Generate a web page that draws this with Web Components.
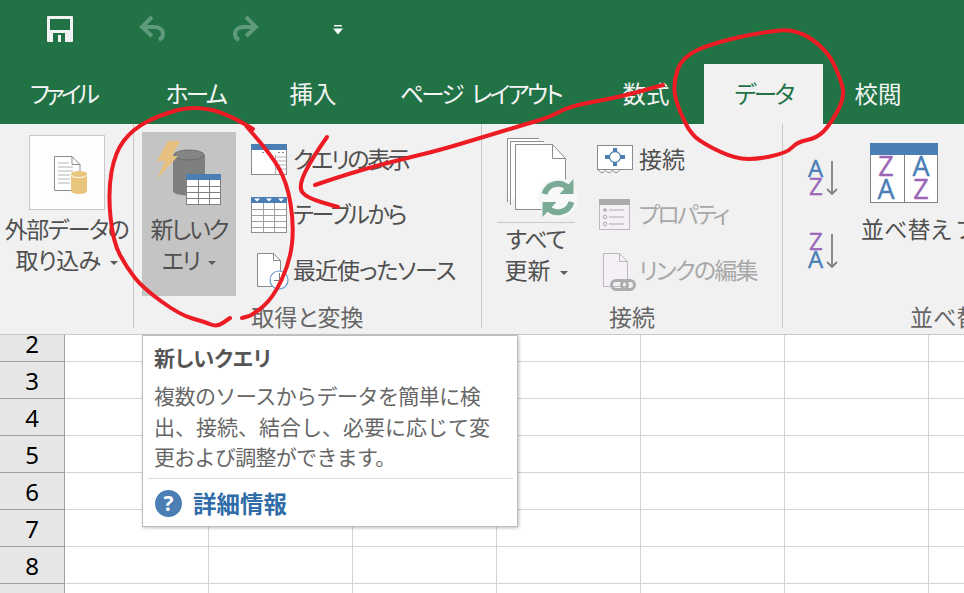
<!DOCTYPE html>
<html lang="ja">
<head>
<meta charset="utf-8">
<title>Excel データ タブ</title>
<style>
    html, body { margin: 0; padding: 0; background: #fff; overflow: hidden; }
</style>
</head>
<body>
<xl-window>
    <xl-titlebar></xl-titlebar>
    <xl-tabs>
        <xl-tab w="126" ls="-3.8">ファイル</xl-tab>
        <xl-tab w="125" gap="7" ls="-2.6">ホーム</xl-tab>
        <xl-tab w="108" gap="1">挿入</xl-tab>
        <xl-tab w="219" gap="4" ls="-2.6" ws="7">ページ レイアウト</xl-tab>
        <xl-tab w="106" gap="3">数式</xl-tab>
        <xl-tab w="119" gap="5" ls="-2.6" active>データ</xl-tab>
        <xl-tab w="106" gap="2">校閲</xl-tab>
    </xl-tabs>
    <xl-ribbon>
        <xl-group label="" w="134">
            <xl-big top="11" box ls="-1.5">
                <xl-icon name="external" slot="icon"></xl-icon>
                外部データの<br><span style="letter-spacing:-.6px">取り込み</span><xl-caret></xl-caret>
            </xl-big>
        </xl-group>
        <xl-group label="取得と変換" w="348">
            <xl-big top="8" left="8" width="94" pressed h="83" ls="-2">
                <xl-icon name="query" slot="icon"></xl-icon>
                新しいク<br>エリ<xl-caret></xl-caret>
            </xl-big>
            <xl-stack left="15">
                <xl-small ls="-2.4"><xl-icon name="view" slot="icon"></xl-icon>クエリの表示</xl-small>
                <xl-small ls="-2.3"><xl-icon name="table" slot="icon"></xl-icon>テーブルから</xl-small>
                <xl-small ls="-1"><xl-icon name="recent" slot="icon"></xl-icon>最近使ったソース</xl-small>
            </xl-stack>
        </xl-group>
        <xl-group label="接続" w="301">
            <xl-big top="12" left="15" width="78" h="89" rule ls="-1">
                <xl-icon name="refresh" slot="icon"></xl-icon>
                すべて<br><span style="letter-spacing:0">更新</span><xl-caret></xl-caret>
            </xl-big>
            <xl-stack left="22">
                <xl-small><xl-icon name="connect" slot="icon"></xl-icon>接続</xl-small>
                <xl-small disabled ls="-2.8"><xl-icon name="props" slot="icon"></xl-icon>プロパティ</xl-small>
                <xl-small disabled ls="-1.7"><xl-icon name="link" slot="icon"></xl-icon>リンクの編集</xl-small>
            </xl-stack>
        </xl-group>
        <xl-group label="並べ替えとフィルター" w="181" open>
            <xl-sort-col>
                <xl-icon name="az"></xl-icon>
                <xl-icon name="za"></xl-icon>
            </xl-sort-col>
            <xl-big top="19" left="21" width="200" h="72" start>
                <xl-icon name="sort" slot="icon"></xl-icon>
                並べ替え フィルター
            </xl-big>
        </xl-group>
    </xl-ribbon>
    <xl-sheet></xl-sheet>
    <xl-tooltip>
        <span slot="title">新しいクエリ</span>
        <span style="letter-spacing:-.55px">複数のソースからデータを簡単に検</span><br>出、接続、結合し、必要に応じて変<br><span style="letter-spacing:-.7px">更および調整ができます。</span>
        <span slot="help">詳細情報</span>
    </xl-tooltip>
    <xl-ink></xl-ink>
</xl-window>

<script>
const ICONS = {
    save: `<svg width="26" height="26" viewBox="0 0 26 26">
        <path d="M0 1a1 1 0 0 1 1-1h24a1 1 0 0 1 1 1v24a1 1 0 0 1-1 1H1a1 1 0 0 1-1-1z" fill="#f2f2f2"/>
        <rect x="3" y="3" width="20" height="11" fill="#217346"/>
        <rect x="6" y="17" width="12" height="9" fill="#217346"/>
        <rect x="11" y="19" width="3" height="7" fill="#f2f2f2"/>
    </svg>`,
    undo: `<svg width="28" height="28" viewBox="0 0 28 28" fill="none" stroke="#5f9a7d" stroke-width="4">
        <path d="M13 2 3 12l10 9"/><path d="M4 12h11c6 0 9 3 9 7 0 3-2 5-4 6"/>
    </svg>`,
    redo: `<svg width="28" height="28" viewBox="0 0 28 28" fill="none" stroke="#5f9a7d" stroke-width="4">
        <path d="m15 2 10 10-10 9"/><path d="M24 12H13c-6 0-9 3-9 7 0 3 2 5 4 6"/>
    </svg>`,
    qat: `<svg width="10" height="10" viewBox="0 0 10 10">
        <rect x="1" y="0" width="8" height="1.4" fill="#fff"/><path d="M0 3.500h10L5 9.500z" fill="#fff"/>
    </svg>`,
    external: `<svg width="75" height="75" viewBox="0 0 75 75" fill="none">
        <path d="M25.500 21.500H43l8 8v26H25.500z" fill="#fff" stroke="#8c8c8c"/>
        <path d="M43 21.500v8h8" stroke="#8c8c8c"/>
        <path d="M29 28h11M29 32h15M29 36h15M29 40h12M29 44h12M29 48h12" stroke="#b4b4b4"/>
        <path d="M42 39c0-4 16-4 16 0v17c0 4-16 4-16 0z" fill="#e9c47d"/>
        <path d="M42.500 40c1 3.500 14 3.500 15 0" stroke="#fff"/>
    </svg>`,
    query: `<svg width="94" height="83" viewBox="0 0 94 83" fill="none">
        <path d="M31 24c0-6 32-6 32 0v35c0 6-32 6-32 0z" fill="#7f7f7f"/>
        <ellipse cx="47" cy="23" rx="15" ry="5" fill="#858585" stroke="#6c6c6c"/>
        <path d="M26 9h12l-8 15h6L15 47l8-18h-8z" fill="#e8c07f"/>
        <rect x="44.500" y="42.500" width="34" height="30" fill="#fff" stroke="#808080"/>
        <rect x="44" y="42" width="35" height="6" fill="#4a7eb5"/>
        <path d="M45 54.500h33M45 60.500h33M45 66.500h33M56.500 48v24M67.500 48v24" stroke="#808080"/>
    </svg>`,
    view: `<svg width="36" height="31" viewBox="0 0 36 31" fill="none">
        <rect x=".5" y=".5" width="35" height="30" fill="#fff" stroke="#8c8c8c"/>
        <rect width="36" height="6" fill="#4a7eb5"/>
        <path d="M11 8.500h2M15 8.500h2M27 8.500h2M31 8.500h2" stroke="#8c8c8c"/>
        <path d="M24.500 11v20M25 13h10M25 17h10M25 21h10M25 25h10" stroke="#b0b0b0"/>
    </svg>`,
    table: `<svg width="36" height="36" viewBox="0 0 36 36" fill="none">
        <rect x=".5" y=".5" width="35" height="35" fill="#fff" stroke="#8c8c8c"/>
        <rect width="36" height="6" fill="#4a7eb5"/>
        <path d="M3 1.500h6l-3 3zM15 1.500h6l-3 3zM27 1.500h6l-3 3z" fill="#fff"/>
        <path d="M1 12.500h34M1 18.500h34M1 24.500h34M1 30.500h34M12.500 6v30M23.500 6v30" stroke="#a0a0a0"/>
    </svg>`,
    recent: `<svg width="42" height="38" viewBox="0 0 42 38" fill="none">
        <path d="M6.500 1.500h16l7 7v26h-23z" fill="#fff" stroke="#8c8c8c"/>
        <path d="M22.500 1.500v7h7" stroke="#8c8c8c"/>
        <circle cx="28" cy="28" r="9" fill="#fff" stroke="#6a9bd0" stroke-width="1.200"/>
        <path d="M28.500 21v7.500H23" stroke="#7a7a7a"/>
    </svg>`,
    refresh: `<svg width="78" height="89" viewBox="0 0 78 89" fill="none">
        <path d="M10.500 66V2.500H42" stroke="#8c8c8c" fill="#fff"/>
        <path d="M13.500 69V5.500H47" stroke="#8c8c8c" fill="#fff"/>
        <path d="M18.500 8.500h37l13 14v51h-50z" fill="#fff" stroke="#8c8c8c"/>
        <path d="M55.500 8.500v14h13" stroke="#8c8c8c"/>
        <circle cx="61" cy="62" r="20" fill="#f8f8f8"/>
        <path d="M47.500 58a14 14 0 0 1 24-5.500" stroke="#7aab97" stroke-width="6"/>
        <path d="M76.500 43v15h-14z" fill="#7aab97"/>
        <path d="M74.500 66a14 14 0 0 1-24 5.500" stroke="#7aab97" stroke-width="6"/>
        <path d="M45.500 81V66h14z" fill="#7aab97"/>
    </svg>`,
    connect: `<svg width="36" height="30" viewBox="0 0 36 30" fill="none">
        <path d="M1.500 24.500c1 4 6 4 7 0 1 4 6 4 7 0 1 4 6 4 7 0" stroke="#8c8c8c" fill="#fff"/>
        <rect x=".5" y=".5" width="35" height="24" fill="#fff" stroke="#8c8c8c"/>
        <path d="M16 3h4v4h-4zM16 17h4v4h-4zM8 10h5v4H8zM23 10h5v4h-5z" fill="#4a7eb5"/>
        <circle cx="18" cy="12" r="5.500" fill="#fff" stroke="#4a7eb5" stroke-width="1.300"/>
    </svg>`,
    props: `<svg width="36" height="32" viewBox="0 0 36 32" fill="none">
        <rect x="2.500" y=".5" width="30" height="30" fill="#f4f0f6" stroke="#bdb6c0"/>
        <rect x="2" width="31" height="6" fill="#acacac"/>
        <circle cx="8" cy="11" r="1.800" fill="#b0a8b4"/>
        <circle cx="8" cy="18" r="1.800" stroke="#b0a8b4"/>
        <circle cx="8" cy="25" r="1.800" stroke="#b0a8b4"/>
        <path d="M12 11h15M12 18h15M12 25h15" stroke="#b0a8b4"/>
    </svg>`,
    link: `<svg width="42" height="38" viewBox="0 0 42 38" fill="none">
        <path d="M6.500 1.500h16l8 8v25h-24z" fill="#f4f0f6" stroke="#bdb6c0"/>
        <path d="M22.500 1.500v8h8" stroke="#bdb6c0"/>
        <rect x="14.500" y="28.500" width="16" height="9" rx="4.500" stroke="#adadad" stroke-width="3"/>
        <rect x="24.500" y="28.500" width="13" height="9" rx="4.500" stroke="#adadad" stroke-width="3"/>
    </svg>`,
    az: `<svg width="32" height="38" viewBox="0 0 32 38" font-family="Open Sans, Liberation Sans, sans-serif" font-size="24">
        <text x="0" y="18" fill="#4a7eb5" stroke="#4a7eb5" stroke-width=".4">A</text>
        <text x="1" y="36" fill="#9a66b8" stroke="#9a66b8" stroke-width=".4">Z</text>
        <path d="M24 2v33M19 30l5 5 5-5" fill="none" stroke="#808080" stroke-width="1.800"/>
    </svg>`,
    za: `<svg width="32" height="38" viewBox="0 0 32 38" font-family="Open Sans, Liberation Sans, sans-serif" font-size="24">
        <text x="1" y="18" fill="#9a66b8" stroke="#9a66b8" stroke-width=".4">Z</text>
        <text x="0" y="36" fill="#4a7eb5" stroke="#4a7eb5" stroke-width=".4">A</text>
        <path d="M24 2v33M19 30l5 5 5-5" fill="none" stroke="#808080" stroke-width="1.800"/>
    </svg>`,
    sort: `<svg width="68" height="60" viewBox="0 0 68 60" font-family="Open Sans, Liberation Sans, sans-serif" font-size="27" text-anchor="middle">
        <rect x=".5" y=".5" width="67" height="59" fill="#fff" stroke="#808080"/>
        <rect width="68" height="12" fill="#4a7eb5"/>
        <path d="M34.500 12v48" stroke="#808080"/>
        <text x="16" y="33" fill="#9a66b8" stroke="#9a66b8" stroke-width=".4">Z</text>
        <text x="16" y="56" fill="#4a7eb5" stroke="#4a7eb5" stroke-width=".4">A</text>
        <text x="51" y="33" fill="#4a7eb5" stroke="#4a7eb5" stroke-width=".4">A</text>
        <text x="51" y="56" fill="#9a66b8" stroke="#9a66b8" stroke-width=".4">Z</text>
    </svg>`
};

class XlWindow extends HTMLElement {
    constructor() {
        super();
        this.attachShadow({ mode: 'open' });
        this.shadowRoot.innerHTML = `
            <style>
                :host {
                    display: flex;
                    flex-direction: column;
                    position: relative;
                    width: 964px;
                    height: 593px;
                    overflow: hidden;
                    color: #444;
                    font-family: "Noto Sans CJK JP", "Noto Sans", sans-serif;
                    font-feature-settings: "palt";
                }
            </style>
            <slot></slot>
        `;
    }
}

class XlIcon extends HTMLElement {
    constructor() {
        super();
        this.attachShadow({ mode: 'open' });
        this.shadowRoot.innerHTML = `
            <style>
                :host { display: block; line-height: 0; }
                svg { display: block; overflow: visible; }
            </style>
            ${ICONS[this.getAttribute('name')]}
        `;
    }
}

class XlTitlebar extends HTMLElement {
    constructor() {
        super();
        this.attachShadow({ mode: 'open' });
        this.shadowRoot.innerHTML = `
            <style>
                :host {
                    display: flex;
                    height: 64px;
                    flex: none;
                    background: #217346;
                    padding: 15px 0 0 47px;
                    box-sizing: border-box;
                }
                xl-icon:nth-of-type(1) { margin-top: 1px; }
                xl-icon:nth-of-type(2) { margin-left: 66px; }
                xl-icon:nth-of-type(3) { margin-left: 64px; }
                xl-icon:nth-of-type(4) { margin: 10px 0 0 74px; }
            </style>
            <xl-icon name="save"></xl-icon>
            <xl-icon name="undo"></xl-icon>
            <xl-icon name="redo"></xl-icon>
            <xl-icon name="qat"></xl-icon>
        `;
    }
}

class XlTabs extends HTMLElement {
    constructor() {
        super();
        this.attachShadow({ mode: 'open' });
        this.shadowRoot.innerHTML = `
            <style>
                :host {
                    display: flex;
                    height: 60px;
                    flex: none;
                    background: #217346;
                }
            </style>
            <slot></slot>
        `;
    }
}

class XlTab extends HTMLElement {
    constructor() {
        super();
        this.attachShadow({ mode: 'open' });
        const active = this.hasAttribute('active');
        this.shadowRoot.innerHTML = `
            <style>
                :host {
                    display: flex;
                    align-items: center;
                    justify-content: center;
                    box-sizing: border-box;
                    flex: none;
                    width: ${this.getAttribute('w')}px;
                    margin-left: ${this.getAttribute('gap') || 0}px;
                    padding-bottom: 3px;
                    font-size: 23.500px;
                    letter-spacing: ${this.getAttribute('ls') || 0}px;
                    word-spacing: ${this.getAttribute('ws') || 0}px;
                    white-space: nowrap;
                    color: ${active ? '#217346' : '#f4f4f4'};
                    background: ${active ? '#f1f1f1' : 'none'};
                }
            </style>
            <slot></slot>
        `;
    }
}

class XlRibbon extends HTMLElement {
    constructor() {
        super();
        this.attachShadow({ mode: 'open' });
        this.shadowRoot.innerHTML = `
            <style>
                :host {
                    display: flex;
                    height: 211px;
                    flex: none;
                    box-sizing: border-box;
                    background: #f1f1f1;
                    border-bottom: 1px solid #c8c8c8;
                    overflow: hidden;
                }
            </style>
            <slot></slot>
        `;
    }
}

class XlGroup extends HTMLElement {
    constructor() {
        super();
        this.attachShadow({ mode: 'open' });
        const open = this.hasAttribute('open');
        this.shadowRoot.innerHTML = `
            <style>
                :host {
                    display: block;
                    position: relative;
                    flex: none;
                    box-sizing: border-box;
                    width: ${this.getAttribute('w')}px;
                    height: 204px;
                    border-right: ${open ? 'none' : '1px solid #c8c8c8'};
                    font-size: 23px;
                    line-height: 31px;
                }
                .body { display: flex; height: 178px; }
                .label {
                    display: block;
                    height: 26px;
                    line-height: 26px;
                    margin-top: 1px;
                    font-size: 23px;
                    color: #666;
                    white-space: nowrap;
                    text-align: ${open ? 'left' : 'center'};
                    padding-left: ${open ? '127px' : '0'};
                }
            </style>
            <div class="body"><slot></slot></div>
            <span class="label">${this.getAttribute('label')}</span>
        `;
    }
}

class XlBig extends HTMLElement {
    constructor() {
        super();
        this.attachShadow({ mode: 'open' });
        const top = this.getAttribute('top');
        const pressed = this.hasAttribute('pressed');
        const h = this.getAttribute('h');
        const width = this.getAttribute('width');
        this.shadowRoot.innerHTML = `
            <style>
                :host {
                    display: block;
                    flex: none;
                    box-sizing: border-box;
                    margin-left: ${this.getAttribute('left') || 0}px;
                    margin-top: ${top}px;
                    width: ${width ? width + 'px' : '100%'};
                    height: ${pressed ? '164px' : 'auto'};
                    background: ${pressed ? '#c4c4c4' : 'none'};
                    text-align: ${this.hasAttribute('start') ? 'left' : 'center'};
                    letter-spacing: ${this.getAttribute('ls') || 0}px;
                    color: #505050;
                    white-space: nowrap;
                }
                .icon {
                    display: flex;
                    justify-content: ${this.hasAttribute('start') ? 'flex-start' : 'center'};
                    box-sizing: border-box;
                    height: ${h || 75}px;
                }
                :host([box]) .icon {
                    width: 76px;
                    margin: 0 auto 5px;
                    background: #fdfdfd;
                    border: 1px solid #c8c8c8;
                }
                :host([box]) ::slotted(xl-icon) { margin: -1px; }
                :host([start]) .icon { padding-left: 9px; }
                :host([rule]) .icon { border-bottom: 1px solid #c8c8c8; margin-bottom: 2px; height: 87px; }
                .text { display: block; margin-top: -2px; }
            </style>
            <div class="icon"><slot name="icon"></slot></div>
            <span class="text"><slot></slot></span>
        `;
    }
}

class XlStack extends HTMLElement {
    constructor() {
        super();
        this.attachShadow({ mode: 'open' });
        this.shadowRoot.innerHTML = `
            <style>
                :host {
                    display: flex;
                    flex-direction: column;
                    flex: none;
                    margin-left: ${this.getAttribute('left') || 0}px;
                    padding-top: 7px;
                }
            </style>
            <slot></slot>
        `;
    }
}

class XlSmall extends HTMLElement {
    constructor() {
        super();
        this.attachShadow({ mode: 'open' });
        this.shadowRoot.innerHTML = `
            <style>
                :host {
                    display: flex;
                    align-items: center;
                    height: 55.500px;
                    color: #505050;
                    white-space: nowrap;
                    letter-spacing: ${this.getAttribute('ls') || 0}px;
                }
                :host([disabled]) { color: #a8a8a8; }
                .icon { width: 42px; flex: none; margin-top: 2px; }
                .text { margin-bottom: 1px; }
            </style>
            <div class="icon"><slot name="icon"></slot></div>
            <span class="text"><slot></slot></span>
        `;
    }
}

class XlSortCol extends HTMLElement {
    constructor() {
        super();
        this.attachShadow({ mode: 'open' });
        this.shadowRoot.innerHTML = `
            <style>
                :host {
                    display: flex;
                    flex-direction: column;
                    flex: none;
                    gap: 35px;
                    margin: 35px 0 0 25px;
                }
            </style>
            <slot></slot>
        `;
    }
}

class XlCaret extends HTMLElement {
    constructor() {
        super();
        this.attachShadow({ mode: 'open' });
        this.shadowRoot.innerHTML = `
            <style>
                :host {
                    display: inline-block;
                    width: 0;
                    height: 0;
                    margin-left: 9px;
                    vertical-align: 4px;
                    border-top: 4.500px solid #5a5a5a;
                    border-left: 4.500px solid transparent;
                    border-right: 4.500px solid transparent;
                }
            </style>
        `;
    }
}

class XlSheet extends HTMLElement {
    constructor() {
        super();
        this.attachShadow({ mode: 'open' });
        let rows = '';
        for (let n = 2; n <= 9; n++) {
            rows += `<div class="row"><div class="head">${n}</div>${'<div class="cell"></div>'.repeat(7)}</div>`;
        }
        this.shadowRoot.innerHTML = `
            <style>
                :host {
                    display: block;
                    flex: 1;
                    min-height: 0;
                    overflow: hidden;
                    background: #fff;
                }
                .rows { margin-top: -10px; }
                .row { display: flex; height: 37px; }
                .head {
                    flex: none;
                    box-sizing: border-box;
                    width: 65px;
                    background: #e6e6e6;
                    border-right: 1px solid #a0a0a0;
                    border-bottom: 1px solid #a0a0a0;
                    font: 24px/37px "Noto Sans", sans-serif;
                    color: #000;
                    text-align: center;
                }
                .cell {
                    flex: none;
                    box-sizing: border-box;
                    width: 144px;
                    border-right: 1px solid #d4d4d4;
                    border-bottom: 1px solid #d4d4d4;
                }
            </style>
            <div class="rows">${rows}</div>
        `;
    }
}

class XlTooltip extends HTMLElement {
    constructor() {
        super();
        this.attachShadow({ mode: 'open' });
        this.shadowRoot.innerHTML = `
            <style>
                :host {
                    display: block;
                    position: absolute;
                    left: 142px;
                    top: 335px;
                    width: 376px;
                    height: 192px;
                    box-sizing: border-box;
                    background: #fff;
                    border: 1px solid #bdbdbd;
                    box-shadow: 1px 1px 3px rgba(0, 0, 0, .25);
                    color: #666;
                }
                .title {
                    padding: 6px 0 0 11px;
                    height: 30px;
                    line-height: 30px;
                    font-size: 21px;
                    font-weight: 700;
                    color: #555;
                }
                .body {
                    padding: 0 0 0 11px;
                    font-size: 21px;
                    font-feature-settings: normal;
                    line-height: 30.500px;
                    white-space: nowrap;
                    height: 96px;
                    box-sizing: border-box;
                    margin-top: 8px;
                }
                hr {
                    margin: 2px 4px 0 5px;
                    border: 0;
                    border-top: 1px solid #dcdcdc;
                }
                .help {
                    display: flex;
                    align-items: center;
                    gap: 11px;
                    padding: 11px 0 0 12px;
                    font-size: 23.500px;
                    font-weight: 700;
                    color: #2f6ca8;
                    line-height: 27px;
                }
                .q {
                    width: 27px;
                    height: 27px;
                    border-radius: 50%;
                    background: #4a7eb5;
                    color: #fff;
                    font: 700 21px/27px "Open Sans", sans-serif;
                    text-align: center;
                }
            </style>
            <div class="title"><slot name="title"></slot></div>
            <div class="body"><slot></slot></div>
            <hr>
            <div class="help"><span class="q">?</span><slot name="help"></slot></div>
        `;
    }
}

class XlInk extends HTMLElement {
    constructor() {
        super();
        this.attachShadow({ mode: 'open' });
        const strokes = [
            // around the query button
            [[247,127],[270,153],[287,182],[294,225],[290,262],[273,298],[253,315],[242,318]],
            [[253,129],[227,113],[192,106],[160,115],[133,129],[115,152],[108,192],[113,242],[127,268],[143,288],[180,315],[205,322],[217,327],[230,318]],
            // hook pointing at the buttons
            [[327,137],[312,158],[298,187],[307,198],[338,207]],
            // long line from the tab
            [[315,185],[353,172],[407,158],[440,150],[480,138],[513,128],[530,123],[550,117],[570,106],[620,97],[663,85]],
            // around the data tab
            [[688,128],[677,107],[673,83],[682,57],[713,43],[763,32],[797,29],[827,50],[840,77],[845,97],[830,125],[817,138],[797,142],[787,153],[753,160],[730,157],[697,140],[688,128]]
        ];
        const paths = strokes.map(pts => {
            let d = `M${pts[0][0]} ${pts[0][1]}`;
            for (let i = 1; i < pts.length - 1; i++) {
                const mx = (pts[i][0] + pts[i + 1][0]) / 2;
                const my = (pts[i][1] + pts[i + 1][1]) / 2;
                d += `Q${pts[i][0]} ${pts[i][1]} ${mx} ${my}`;
            }
            const last = pts[pts.length - 1];
            return `<path d="${d}L${last[0]} ${last[1]}"/>`;
        }).join('');
        this.shadowRoot.innerHTML = `
            <style>
                :host { position: absolute; inset: 0; pointer-events: none; }
                svg { display: block; }
            </style>
            <svg width="964" height="593" fill="none" stroke="#ed1c24" stroke-width="4" stroke-linecap="round" stroke-linejoin="round">${paths}</svg>
        `;
    }
}

customElements.define('xl-window', XlWindow);
customElements.define('xl-icon', XlIcon);
customElements.define('xl-titlebar', XlTitlebar);
customElements.define('xl-tabs', XlTabs);
customElements.define('xl-tab', XlTab);
customElements.define('xl-ribbon', XlRibbon);
customElements.define('xl-group', XlGroup);
customElements.define('xl-big', XlBig);
customElements.define('xl-stack', XlStack);
customElements.define('xl-small', XlSmall);
customElements.define('xl-sort-col', XlSortCol);
customElements.define('xl-caret', XlCaret);
customElements.define('xl-sheet', XlSheet);
customElements.define('xl-tooltip', XlTooltip);
customElements.define('xl-ink', XlInk);
</script>
</body>
</html>
